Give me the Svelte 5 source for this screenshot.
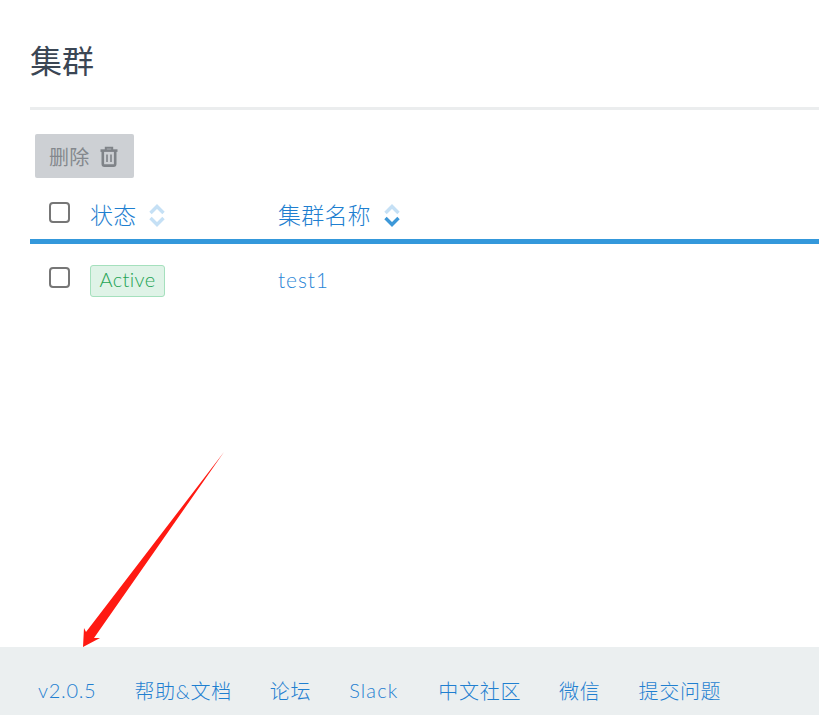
<script lang="ts">
    let links = [
        { text: "v2.0.5" },
        { text: "帮助&文档" },
        { text: "论坛" },
        { text: "Slack", wide: true },
        { text: "中文社区" },
        { text: "微信" },
        { text: "提交问题" },
    ];
</script>

<div class="page">
    <main>
        <h1>集群</h1>
        <div class="toolbar">
            <button class="delete">
                删除
                <svg width="18" height="21" viewBox="0 0 18 21" fill="none">
                    <path d="M.5 4.6h17" stroke="#7f8388" stroke-width="2.6" />
                    <path d="M5.8 4V1.8h6.4V4" stroke="#7f8388" stroke-width="2" />
                    <path d="M2.8 5v13c0 .9.7 1.6 1.6 1.6h9.2c.9 0 1.6-.7 1.6-1.6V5" stroke="#7f8388" stroke-width="2.6" />
                    <path d="M7 8.5v7.5M11 8.5v7.5" stroke="#7f8388" stroke-width="1.6" />
                </svg>
            </button>
        </div>
        <div class="row head">
            <span class="check"></span>
            <div class="col-state">状态
                <svg class="sort" width="18" height="25" viewBox="0 0 18 25" fill="none">
                    <path d="M2.5 10 9 3.5 15.5 10" stroke="#c5e0f5" stroke-width="3.4" />
                    <path d="M2.5 15 9 21.5 15.5 15" stroke="#c5e0f5" stroke-width="3.4" />
                </svg>
            </div>
            <div class="col-name">集群名称
                <svg class="sort" width="18" height="25" viewBox="0 0 18 25" fill="none">
                    <path d="M2.5 10 9 3.5 15.5 10" stroke="#c5e0f5" stroke-width="3.4" />
                    <path d="M2.5 15 9 21.5 15.5 15" stroke="#3d98d8" stroke-width="3.4" />
                </svg>
            </div>
        </div>
        <div class="row body">
            <span class="check"></span>
            <div class="col-state"><span class="badge">Active</span></div>
            <div class="col-name link">test1</div>
        </div>
    </main>
    <footer>
        {#each links as link}
            <span class={link.wide ? "wide" : ""}>{link.text}</span>
        {/each}
    </footer>
    <svg class="arrow" width="160" height="210" viewBox="0 0 160 210">
        <path d="M143 2 13 188 19 188 2 197 3 178 5 182 Z" fill="#ff1a12" />
    </svg>
</div>

<style>
    :global(body) {
        margin: 0;
        background: #fff;
    }

    .page {
        position: relative;
        height: 715px;
        overflow: hidden;
        display: flex;
        flex-direction: column;
        font-family: Lato, "Noto Sans CJK SC", sans-serif;
        font-weight: 300;
    }

    main {
        flex: 1;
        padding-left: 30px;
    }

    h1 {
        margin: 0;
        padding-top: 39px;
        height: 68px;
        border-bottom: 3px solid #ebedee;
        font-size: 32px;
        font-weight: 400;
        line-height: 44px;
        color: #3b4654;
    }

    .toolbar {
        padding: 24px 0 0 5px;
    }

    .delete {
        display: flex;
        align-items: center;
        gap: 10px;
        width: 99px;
        height: 44px;
        padding: 0 0 0 14px;
        border: none;
        border-radius: 2px;
        background: #cdd0d4;
        color: #84888d;
        font-family: inherit;
        font-size: 20px;
        letter-spacing: 0.3px;
    }

    .row {
        display: flex;
        align-items: center;
        font-size: 23px;
        color: #1f7fd0;
    }

    .head {
        box-sizing: border-box;
        height: 66px;
        padding-top: 12px;
        border-bottom: 5px solid #3498db;
        letter-spacing: 0.2px;
    }

    .body {
        height: 71px;
    }

    .check {
        flex: none;
        box-sizing: border-box;
        width: 21px;
        height: 21px;
        margin: 0 20px 4px 19px;
        border: 2px solid #767676;
        border-radius: 4px;
        background: #fff;
    }

    .col-state {
        display: flex;
        align-items: center;
        gap: 12px;
        width: 188px;
    }

    .col-name {
        display: flex;
        align-items: center;
        gap: 12px;
    }

    .head .col-state,
    .head .col-name {
        margin-bottom: 2px;
    }

    .sort {
        margin-top: 3px;
    }

    .badge {
        box-sizing: border-box;
        width: 75px;
        height: 32px;
        margin-top: 2px;
        border: 1px solid #a5e0bd;
        border-radius: 3px;
        background: #dff3e7;
        color: #1fa455;
        font-size: 20px;
        letter-spacing: 0.4px;
        line-height: 27px;
        text-align: center;
    }

    .link {
        font-size: 21px;
        letter-spacing: 0.9px;
        color: #2b86d6;
    }

    footer {
        flex: none;
        box-sizing: border-box;
        height: 68px;
        display: flex;
        align-items: center;
        gap: 38px;
        padding: 18px 0 0 38px;
        background: #ebeff0;
        color: #1f7fd0;
        font-size: 20px;
        letter-spacing: 0.7px;
    }

    .wide {
        margin-right: 2px;
        letter-spacing: 1.1px;
    }

    .arrow {
        position: absolute;
        left: 81px;
        top: 450px;
    }
</style>
